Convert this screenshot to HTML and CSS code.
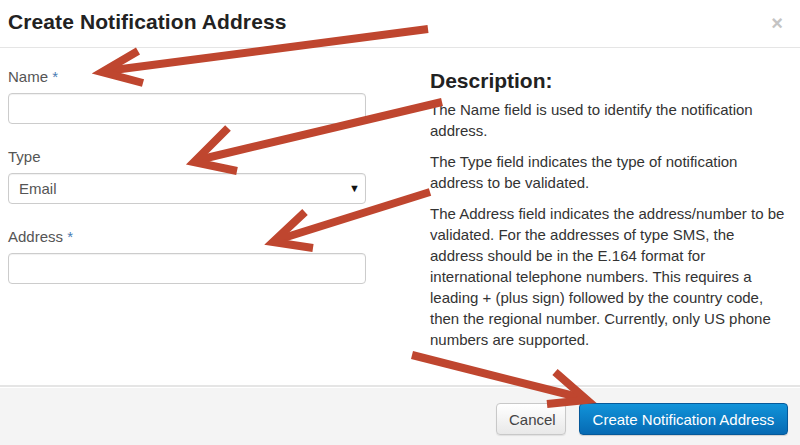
FILE: index.html
```html
<!DOCTYPE html>
<html>
<head>
<meta charset="utf-8">
<link rel="stylesheet" href="styles.css">
</head>
<body>
<div class="modal">
  <div class="modal-header">
    <h3 class="modal-title">Create Notification Address</h3>
    <span class="close">×</span>
  </div>
  <div class="modal-body">
    <form class="form">
      <label class="label">Name <span class="req">*</span></label>
      <input class="input" type="text">
      <label class="label">Type</label>
      <div class="select">
        <span class="select-value">Email</span>
        <span class="select-caret">▼</span>
      </div>
      <label class="label">Address <span class="req">*</span></label>
      <input class="input" type="text">
    </form>
    <div class="desc">
      <h4 class="desc-title">Description:</h4>
      <p>The Name field is used to identify the notification address.</p>
      <p>The Type field indicates the type of notification address to be validated.</p>
      <p>The Address field indicates the address/number to be validated. For the addresses of type SMS, the address should be in the E.164 format for international telephone numbers. This requires a leading + (plus sign) followed by the country code, then the regional number. Currently, only US phone numbers are supported.</p>
    </div>
  </div>
  <div class="modal-footer">
    <button class="btn btn-default">Cancel</button>
    <button class="btn btn-primary">Create Notification Address</button>
  </div>
  <svg class="arrows" width="800" height="445" viewBox="0 0 800 445">
    <g fill="none" stroke="#bf462f" stroke-width="8" stroke-linejoin="miter" stroke-miterlimit="10">
      <line x1="428" y1="29" x2="106" y2="71"/>
      <polyline points="138,51 102,72 143,83"/>
      <line x1="442" y1="102" x2="198" y2="160"/>
      <polyline points="228,128 194,162 237,171"/>
      <line x1="430" y1="192" x2="277" y2="240"/>
      <polyline points="305,212 273,242 313,248"/>
      <line x1="412" y1="355" x2="582" y2="398"/>
      <polyline points="555,372 587,400 547,404"/>
    </g>
  </svg>
</div>
</body>
</html>
```

FILE: styles.css
```css
* { box-sizing: border-box; }
html, body {
  margin: 0;
  padding: 0;
  background: #fff;
}
body {
  font-family: "Liberation Sans", Arial, Helvetica, sans-serif;
  font-size: 15px;
  line-height: 21px;
  color: #333;
}
.modal {
  position: relative;
  width: 800px;
  height: 445px;
  display: flex;
  flex-direction: column;
  overflow: hidden;
}
.modal-header {
  height: 48px;
  border-bottom: 1px solid #e5e5e5;
  display: flex;
  align-items: center;
  justify-content: space-between;
  padding: 0 17px 4px 8px;
  flex: none;
}
.modal-title {
  margin: 0;
  font-size: 21px;
  line-height: 26px;
  font-weight: bold;
  color: #222;
  letter-spacing: 0.1px;
}
.close {
  font-size: 20px;
  font-weight: bold;
  color: #c4c4c4;
  line-height: 20px;
  margin-top: 2px;
}
.modal-body {
  flex: 1;
  display: grid;
  grid-template-columns: 358px 356px;
  column-gap: 64px;
  padding: 19px 8px 0 8px;
}
.form {
  display: flex;
  flex-direction: column;
  margin: 0;
}
.label {
  color: #555;
  font-size: 15px;
  line-height: 20px;
  margin-bottom: 6px;
}
.req { color: #4a7db3; }
.input, .select {
  height: 31px;
  width: 358px;
  border: 1px solid #ccc;
  border-radius: 4px;
  box-shadow: inset 0 1px 1px rgba(0,0,0,0.06);
  background: #fff;
  margin: 0 0 23px 0;
  padding: 0 10px;
  font: inherit;
}
.select {
  display: flex;
  align-items: center;
  justify-content: space-between;
  color: #555;
  padding: 0 5px 0 10px;
}
.select-caret {
  font-size: 11px;
  color: #111;
}
.desc {
  padding-top: 1px;
}
.desc-title {
  margin: 0 0 5px 0;
  font-size: 21px;
  line-height: 26px;
  font-weight: bold;
  color: #222;
}
.desc p {
  margin: 0 0 10px 0;
}
.modal-footer {
  height: 60px;
  flex: none;
  border-top: 2px solid #e5e5e5;
  box-shadow: inset 0 1px 0 #fff;
  background: #f4f4f4;
  display: flex;
  justify-content: flex-end;
  align-items: flex-start;
  gap: 13px;
  padding: 16px 12px 0 0;
}
.btn {
  height: 32px;
  font-family: inherit;
  font-size: 15px;
  border-radius: 4px;
  padding: 0 12px;
  cursor: pointer;
}
.btn-default {
  color: #444;
  background: linear-gradient(#ffffff, #e8e8e8);
  border: 1px solid #c8c8c8;
  box-shadow: 0 1px 1px rgba(0,0,0,0.08);
  width: 70px;
}
.btn-primary {
  color: #fff;
  background: linear-gradient(#1193d9, #066ab3);
  border: 1px solid #05599a;
  box-shadow: 0 1px 1px rgba(0,0,0,0.15);
  width: 209px;
}
.arrows {
  position: absolute;
  left: 0;
  top: 0;
  pointer-events: none;
}
```
